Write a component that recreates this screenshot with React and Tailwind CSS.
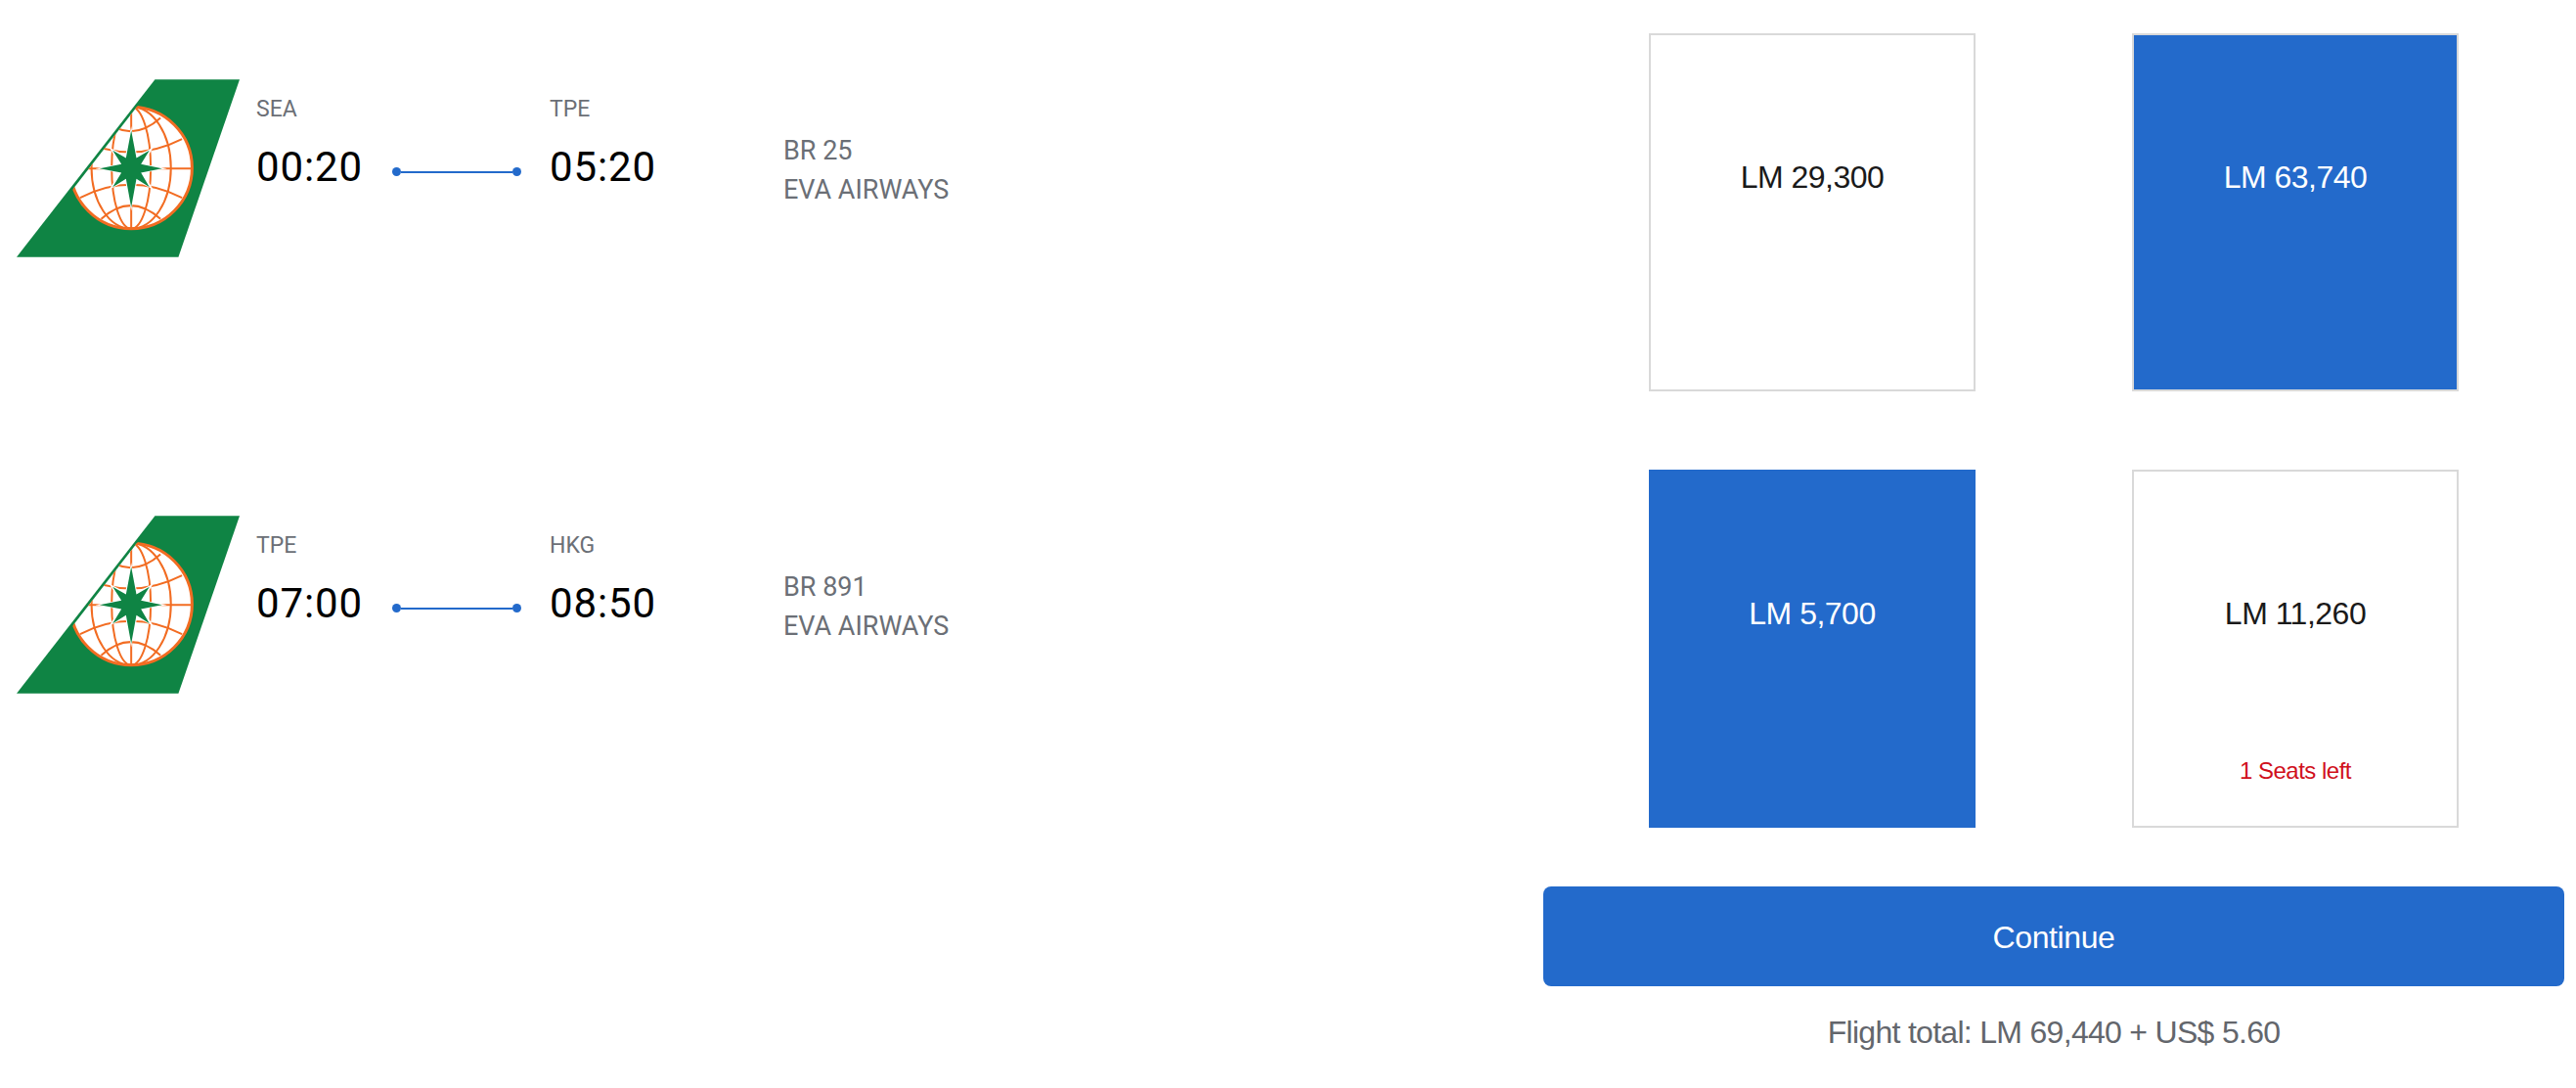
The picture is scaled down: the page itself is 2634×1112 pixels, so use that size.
const plex = "font-['Roboto',sans-serif]";
const price = "font-['Liberation_Sans',sans-serif]";

function Tail() {
  const o = "#f26c22";
  return (
    <svg width="228" height="182" viewBox="50 62 685 545" className="block shrink-0 mt-[1px]">
      <defs>
        <clipPath id="globeClip">
          <polygon points="427,136 218,405 218,620 700,620 700,136" />
        </clipPath>
      </defs>
      <polygon points="475,62 735,62 547,607 50,607" fill="#0f8444" />
      <g clipPath="url(#globeClip)">
        <circle cx="402" cy="333" r="187" fill="#ffffff" stroke={o} strokeWidth="9" />
        <g fill="none" stroke={o} strokeWidth="6">
          <line x1="402" y1="146" x2="402" y2="520" />
          <ellipse cx="402" cy="333" rx="60" ry="187" />
          <ellipse cx="402" cy="333" rx="122" ry="187" />
          <line x1="215" y1="335" x2="589" y2="335" />
          <path d="M240 245 Q400 325 558 245" />
          <path d="M245 425 Q400 345 558 425" />
          <path d="M310 180 Q400 262 492 180" />
          <path d="M310 490 Q400 408 492 490" />
        </g>
        <polygon
          points="402,205 420,296 470,270 438,321 512,335 438,349 470,400 420,374 402,465 384,374 334,400 366,349 292,335 366,321 334,270 384,296"
          fill="#ffffff"
        />
      </g>
      <polygon
        points="402,218 418,303 458,280 432,322 497,335 432,348 458,392 418,367 402,455 386,367 345,392 372,348 305,335 372,322 345,280 386,303"
        fill="#0f8444"
      />
    </svg>
  );
}

function Leg({ from, depart, to, arrive, number }) {
  return (
    <div className="flex items-start pt-[46px] pl-[17px] h-[366px]">
      <Tail />
      <div className={`flex items-start ${plex}`}>
        <div className="ml-[17px] w-[139px]">
          <div className="text-[23px] leading-[30px] mt-[17px] text-[#6b6f76]">{from}</div>
          <div className="text-[42px] leading-[50px] mt-[19px] tracking-[0.9px] text-black">{depart}</div>
        </div>
        <div className="flex items-center w-[132px] mt-[91px]">
          <span className="w-[9px] h-[9px] rounded-full bg-[#236acb] shrink-0" />
          <span className="flex-1 h-[2px] bg-[#236acb]" />
          <span className="w-[9px] h-[9px] rounded-full bg-[#236acb] shrink-0" />
        </div>
        <div className="ml-[29px] w-[239px]">
          <div className="text-[23px] leading-[30px] mt-[17px] text-[#6b6f76]">{to}</div>
          <div className="text-[42px] leading-[50px] mt-[19px] tracking-[0.9px] text-black">{arrive}</div>
        </div>
        <div className="text-[27px] leading-[40px] mt-[54px] text-[#6b6f76] whitespace-nowrap">
          <div>{number}</div>
          <div>EVA AIRWAYS</div>
        </div>
      </div>
    </div>
  );
}

function Fare({ label, selected, border, note }) {
  return (
    <div
      className={`relative w-[334px] h-[366px] border-2 flex justify-center pt-[125px] ${price} ${
        selected ? "bg-[#236acb] text-white" : "bg-white text-[#1a1a1a]"
      } ${border ? "border-[#d9d9d9]" : "border-[#236acb]"}`}
    >
      <span className="text-[32px] leading-[40px] tracking-[-0.5px]">{label}</span>
      {note && (
        <span className="absolute bottom-[41px] left-0 right-0 text-center text-[24px] leading-[30px] tracking-[-0.5px] text-[#d0101b]">
          {note}
        </span>
      )}
    </div>
  );
}

export default function App() {
  return (
    <div className="w-[2634px] h-[1112px] bg-white flex overflow-hidden">
      <div className="w-[1578px] shrink-0 pt-[34px] flex flex-col gap-[80px]">
        <Leg from="SEA" depart="00:20" to="TPE" arrive="05:20" number="BR 25" />
        <Leg from="TPE" depart="07:00" to="HKG" arrive="08:50" number="BR 891" />
      </div>
      <div className="w-[1044px] shrink-0 pt-[34px] flex flex-col">
        <div className="flex gap-[160px] pl-[108px]">
          <Fare label="LM 29,300" border />
          <Fare label="LM 63,740" selected border />
        </div>
        <div className="flex gap-[160px] pl-[108px] mt-[80px]">
          <Fare label="LM 5,700" selected />
          <Fare label="LM 11,260" border note="1 Seats left" />
        </div>
        <button className={`mt-[60px] h-[102px] w-full rounded-[8px] bg-[#236acb] text-white text-[32px] pt-[2px] tracking-[-0.4px] ${price}`}>
          Continue
        </button>
        <div className={`mt-[27px] text-center text-[32px] leading-[40px] tracking-[-0.7px] text-[#63666c] ${price}`}>
          Flight total: LM 69,440 + US$ 5.60
        </div>
      </div>
    </div>
  );
}
